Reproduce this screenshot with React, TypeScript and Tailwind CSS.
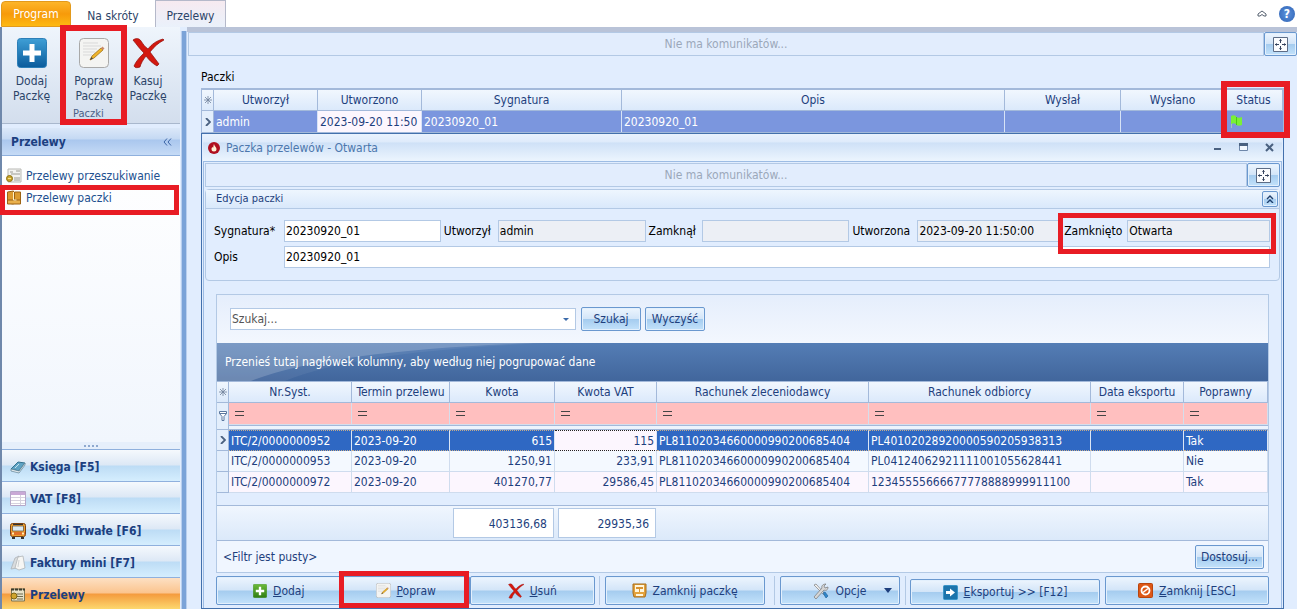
import React from "react";

const glossy =
  "rounded-xs border border-[#6a98cf] bg-[linear-gradient(#edf5fe_0%,#d3e5f8_48%,#a5ccef_52%,#c3e2fb_100%)] shadow-[inset_0_0_0_1px_#e3f0fd]";

const PlusIcon = ({ size, blue }: { size: number; blue?: boolean }) => (
  <svg width={size} height={size} viewBox="0 0 30 30">
    <defs>
      <linearGradient id={blue ? "plusBlue" : "plusGreen"} x1="0" y1="0" x2="0" y2="1">
        <stop offset="0" stopColor={blue ? "#3f9fd6" : "#6dbb3a"} />
        <stop offset="1" stopColor={blue ? "#0b5c9c" : "#2f7d12"} />
      </linearGradient>
    </defs>
    <rect x="0.5" y="0.5" width="29" height="29" rx="3" fill={blue ? "url(#plusBlue)" : "url(#plusGreen)"} stroke={blue ? "#2c7fb8" : "#3c8a1c"} />
    <path d="M12.500 6h5v6.500H24v5h-6.500V24h-5v-6.500H6v-5h6.500z" fill="#fff" />
  </svg>
);

const EditIcon = ({ size }: { size: number }) => (
  <svg width={size} height={size} viewBox="0 0 30 30">
    <rect x="0.5" y="0.5" width="29" height="29" rx="4" fill="#f4f4f2" stroke="#a9a9a9" />
    <path d="M4 5h15M4 8h18M4 11h14M4 14h12M4 17h9" stroke="#d9d9d9" />
    <path d="M11 22l2-4 9-8 2 2-9 8z" fill="#f0b429" stroke="#a0721a" strokeWidth="0.800" />
    <path d="M11 22l1.500-3 1.500 1.500z" fill="#444" />
    <path d="M22 10l1.500-1.500 2 2L24 12z" fill="#c98a6a" />
  </svg>
);

const CrossIcon = ({ size }: { size: number }) => (
  <svg width={size} height={size} viewBox="0 0 32 30">
    <path d="M1 2C4 0 7 0 9 3c2 3 4 6 7 8 4-5 8-8 15-10l1 1c-6 3-10 7-14 12 3 4 6 8 9 12l-2 2c-5-3-8-6-11-10-3 4-5 7-6 11-3 1-5 1-6-1 2-5 6-9 10-13C8 11 5 7 1 2z" fill="#d3180f" stroke="#8f0d08" strokeWidth="0.700" />
  </svg>
);

const ListIcon = () => (
  <svg width="16" height="16" viewBox="0 0 16 16">
    <path d="M2 1h13v13H2z" fill="#f3f3f1" stroke="#b9b9b5" />
    <path d="M4 4h3M10 3h4M5 6h9M8 10h6M8 12h6" stroke="#9c9c94" />
    <circle cx="3.500" cy="10.500" r="3" fill="#c9a52c" stroke="#8d7013" />
    <path d="M2 10.500h3" stroke="#f5e08c" />
  </svg>
);

const BoxIcon = () => (
  <svg width="16" height="16" viewBox="0 0 15 16">
    <path d="M1 2l6-1v13l-6-1zM8 2h6v11H8z" fill="#dc9a2e" stroke="#9c6313" />
    <path d="M1 10h13v4H1z" fill="#e9b04c" stroke="#9c6313" />
    <path d="M7 2v8h3" stroke="#fff0c4" fill="none" />
  </svg>
);

const ArchiveIcon = () => (
  <svg width="15" height="15" viewBox="0 0 15 15">
    <path d="M1 1h13v9l-1 4H2l-1-4z" fill="#e3a23c" stroke="#a86c18" />
    <path d="M3 2h9v7H3z" fill="#fff6dc" />
    <path d="M4 4h7v2H4zM7 6h1v3H7z" fill="#d99331" />
    <path d="M4 11h7v2H4z" fill="#fff6dc" />
  </svg>
);

const BookIcon = () => (
  <svg width="16" height="16" viewBox="0 0 16 16">
    <path d="M1 10L8 3l7 1-6 8z" fill="#5fa3c4" stroke="#33718f" />
    <path d="M1 10v2l8 2 6-8V4l-6 8z" fill="#e7eef2" stroke="#5b7f91" strokeWidth="0.700" />
    <path d="M5 9l4-4" stroke="#c5e3f0" />
  </svg>
);

const VatIcon = () => (
  <svg width="16" height="15" viewBox="0 0 16 15">
    <path d="M0.500 0.500h15v14H0.500z" fill="#fff" stroke="#b5a7c9" />
    <path d="M1 1h14v3H1z" fill="#c9a9d6" />
    <path d="M1 6.500h14M1 9.500h14M1 12.500h14M10.500 4v10" stroke="#d6d2de" />
  </svg>
);

const BusIcon = () => (
  <svg width="16" height="16" viewBox="0 0 16 16">
    <rect x="0.500" y="0.500" width="15" height="13" rx="2" fill="#f0a02c" stroke="#7b4312" />
    <path d="M2.500 3h11v5h-11z" fill="#dceaf2" stroke="#5c4a3a" strokeWidth="0.700" />
    <path d="M3 1.500h10" stroke="#333" />
    <path d="M1 9h14v3H1z" fill="#e0702a" />
    <path d="M2 10.500h2M12 10.500h2" stroke="#fff4a8" strokeWidth="2" />
    <path d="M2 14h3v2H2zM11 14h3v2h-3z" fill="#333" />
  </svg>
);

const PapersIcon = () => (
  <svg width="16" height="16" viewBox="0 0 16 16">
    <path d="M1 14L5 3l4-2-2 12z" fill="#d9dcde" stroke="#a9adb0" strokeWidth="0.700" />
    <path d="M5 13L8 2l5-1 2 12-6 2z" fill="#f6f6f4" stroke="#a9adb0" strokeWidth="0.700" />
    <path d="M9 5l-1 7" stroke="#cfd2d4" />
  </svg>
);

const TransferIcon = () => (
  <svg width="16" height="16" viewBox="0 0 16 16">
    <path d="M1.500 2h13v12h-13z" fill="#e8e2c8" stroke="#7b7654" />
    <path d="M1 2.500h14" stroke="#3d3b2a" strokeWidth="2" strokeDasharray="3 1" />
    <path d="M7 7h6M7 9.500h6M7 12h6" stroke="#6f6b4e" />
    <circle cx="4" cy="9" r="3" fill="#cfa42c" stroke="#7f6414" />
  </svg>
);

const MoveIcon = () => (
  <svg width="15" height="15" viewBox="0 0 15 15">
    <path d="M0.500 0.500h14v14H0.500z" fill="#fbfcfe" stroke="#5c6c86" />
    <path d="M7.500 2v4M7.500 9v4M2 7.500h4M9 7.500h4" stroke="#34435e" />
    <path d="M6 4l1.500-2L9 4zM6 11l1.500 2L9 11zM4 6L2 7.500 4 9zM11 6l2 1.500L11 9z" fill="#34435e" />
  </svg>
);

const FlameIcon = () => (
  <svg width="12" height="12" viewBox="0 0 12 12">
    <circle cx="6" cy="6" r="6" fill="#b01020" />
    <path d="M6 2c0 2 2.500 3 2.500 5A2.500 2.500 0 0 1 3.500 7c0-1 .6-1.500 1-2l.7.8C5.500 4.500 5.500 3 6 2z" fill="#fff3d6" />
  </svg>
);

const FlagIcon = () => (
  <svg width="12" height="14" viewBox="0 0 12 14">
    <path d="M0.500 1v12" stroke="#a9c3b4" />
    <path d="M0 1c2-1 3-1 5 0v1c2 1 4 1 6 0v8c-2 1-4 1-6 0V9C3 8 2 8 0 9z" fill="#7af036" />
    <path d="M5.500 2v8" stroke="#4cc912" />
  </svg>
);

const ToolsIcon = () => (
  <svg width="16" height="16" viewBox="0 0 16 16">
    <path d="M1 2l2-1 9 10-1 1z" fill="#f2f2f2" stroke="#7d7d7d" strokeWidth="0.700" />
    <path d="M10 10l2-1 3 4-2 2z" fill="#2f86c9" stroke="#1c5c94" strokeWidth="0.600" />
    <path d="M1 14l8-9c-1-2 1-4 4-4l-2 2 1 2 3-1c0 3-2 4-4 3l-8 9z" fill="#d6d6d6" stroke="#777" strokeWidth="0.700" />
  </svg>
);

const ExportIcon = () => (
  <svg width="15" height="15" viewBox="0 0 15 15">
    <rect x="0.500" y="0.500" width="14" height="14" rx="1" fill="#1c74ac" stroke="#3a95c9" />
    <path d="M3 6h4V3.500l5 4-5 4V9H3z" fill="#fff" />
  </svg>
);

const StopIcon = () => (
  <svg width="15" height="15" viewBox="0 0 15 15">
    <rect x="0.500" y="0.500" width="14" height="14" rx="1" fill="#dd5716" stroke="#b9440d" />
    <circle cx="7.500" cy="7.500" r="4" fill="none" stroke="#fff" strokeWidth="1.800" />
    <path d="M5 9.500l5-4" stroke="#fff" strokeWidth="1.600" />
  </svg>
);

const StarIcon = () => (
  <svg className="mx-auto" width="8" height="8" viewBox="0 0 8 8">
    <path d="M4 0v8M0 4h8M1 1l6 6M7 1L1 7" stroke="#6f8099" strokeWidth="0.800" />
  </svg>
);

const RowArrow = () => (
  <svg className="mx-auto" width="6" height="8" viewBox="0 0 6 8">
    <path d="M1 0l4 4-4 4" fill="none" stroke="#4a6180" strokeWidth="1.800" />
  </svg>
);

const Mark = ({ className }: { className: string }) => (
  <div className={`pointer-events-none absolute z-10 border-[#e81c24] ${className}`} />
);

const MessageBar = () => (
  <div className="flex h-6">
    <div className="flex flex-1 items-center justify-center border border-[#b3c9e5] bg-[#e2edfd] text-[#9ba8ba]">
      Nie ma komunikatów...
    </div>
    <button className={`flex w-[33px] items-center justify-center ${glossy}`} aria-label="Rozwiń komunikaty">
      <MoveIcon />
    </button>
  </div>
);

const Field = ({ label, value, locked, className }: { label: string; value: string; locked?: boolean; className?: string }) => {
  const id = React.useId();
  return (
    <>
      <label htmlFor={id} className="pl-[3px] whitespace-nowrap">{label}</label>
      <input
        id={id}
        defaultValue={value}
        readOnly={locked}
        className={`h-[22px] w-full min-w-0 border border-[#b3c9e5] px-px outline-none ${className ?? ""}`}
      />
    </>
  );
};

const ribbon = [
  { icon: <PlusIcon size={30} blue />, label: "Dodaj", width: "w-[59px]", marked: false },
  { icon: <EditIcon size={30} />, label: "Popraw", width: "w-[66px]", marked: true },
  { icon: <CrossIcon size={32} />, label: "Kasuj", width: "w-[42px]", marked: false },
];

const sections = [
  { icon: <BookIcon />, label: "Księga [F5]" },
  { icon: <VatIcon />, label: "VAT [F8]" },
  { icon: <BusIcon />, label: "Środki Trwałe [F6]" },
  { icon: <PapersIcon />, label: "Faktury mini [F7]" },
  { icon: <TransferIcon />, label: "Przelewy", active: true },
];

const packageHeads = ["Utworzył", "Utworzono", "Sygnatura", "Opis", "Wysłał", "Wysłano", "Status"];
const heads = ["Nr.Syst.", "Termin przelewu", "Kwota", "Kwota VAT", "Rachunek zleceniodawcy", "Rachunek odbiorcy", "Data eksportu", "Poprawny"];
const rows = [
  ["ITC/2/0000000952", "2023-09-20", "615", "115", "PL81102034660000990200685404", "PL40102028920000590205938313", "", "Tak"],
  ["ITC/2/0000000953", "2023-09-20", "1250,91", "233,91", "PL81102034660000990200685404", "PL04124062921111001055628441", "", "Nie"],
  ["ITC/2/0000000972", "2023-09-20", "401270,77", "29586,45", "PL81102034660000990200685404", "12345555666677778888999911100", "", "Tak"],
];

const headCell = "overflow-hidden whitespace-nowrap border-r border-b border-[#a3b9da] bg-[linear-gradient(#f1f7fe,#dbe9fb)] p-0 text-center font-normal text-[#1e3f7d]";

const Sidebar = () => (
  <aside className="flex w-[180px] shrink-0 flex-col border-l-2 border-[#6f88ab]">
    <div className="h-[97px] border-b border-[#a9b8cd] bg-[linear-gradient(#eff5fc,#dbe5f2_70%,#d3deed)] pt-[11px] text-[#2c4468]">
      <div className="flex">
        {ribbon.map((b) => (
          <button key={b.label} className={`relative flex flex-col items-center leading-[15px] ${b.width}`}>
            <span className="flex h-[30px] items-center">{b.icon}</span>
            <span className="mt-1.5">{b.label}</span>
            <span>Paczkę</span>
            {b.marked && <Mark className="-top-[13px] -left-px h-[100px] w-[67px] border-[6px]" />}
          </button>
        ))}
      </div>
      <p className="pl-[71px] text-[11px] leading-[20px] text-[#4a6187]">Paczki</p>
    </div>
    <div className="mt-1 flex h-7 items-center justify-between border-b border-[#8fb0dd] bg-[linear-gradient(#dbe8f9_0%,#c5d9f3_40%,#aac7ee_45%,#c6dbf6_100%)] pr-2 pl-[9px]">
      <h2 className="font-bold text-[#1c3f80]">Przelewy</h2>
      <button aria-label="Zwiń">
        <svg width="9" height="8" viewBox="0 0 9 8">
          <path d="M4 0.500L1 4l3 3.500M8 0.500L5 4l3 3.500" fill="none" stroke="#3d66a6" />
        </svg>
      </button>
    </div>
    <nav className="flex-1 bg-[linear-gradient(#fff,#f1f6fd)] pt-[9px] text-[#21508f]">
      <a href="#szukaj" className="flex h-[22px] items-center gap-1 pl-1"><ListIcon />Przelewy przeszukiwanie</a>
      <a href="#paczki" className="relative flex h-[22px] items-center gap-1 pl-1">
        <BoxIcon />Przelewy paczki
        <Mark className="-top-[2px] -left-[2px] h-[30px] w-[179px] border-[5px]" />
      </a>
    </nav>
    <div className="flex h-[7px] items-center justify-center gap-0.5 bg-[#e6effb]">
      {[0, 1, 2, 3].map((i) => <span key={i} className="h-0.5 w-0.5 bg-[#8fa9cf]" />)}
    </div>
    {sections.map((s) => (
      <button
        key={s.label}
        className={`flex h-8 shrink-0 items-center gap-1 border-t border-[#8fb0dd] pt-0.5 pl-2 font-bold text-[#1c3f80] ${
          s.active
            ? "bg-[linear-gradient(#fde0c3_0%,#fbc48e_48%,#f49b3e_52%,#fdd86f_100%)]"
            : "bg-[linear-gradient(#f5f9fd_0%,#dde8f5_48%,#bddcf5_52%,#d5eefe_100%)]"
        }`}
      >
        {s.icon}
        {s.label}
      </button>
    ))}
  </aside>
);

const PackagesTable = () => (
  <div className="relative">
    <table className="w-full table-fixed border-separate border-spacing-0 border border-t-2 border-[#a3b9da]">
      <colgroup>
        <col className="w-[12px]" /><col className="w-[104px]" /><col className="w-[104px]" /><col className="w-[200px]" />
        <col /><col className="w-[116px]" /><col className="w-[104px]" /><col className="w-[58px]" />
      </colgroup>
      <thead>
        <tr className="h-[21px]">
          <th className={headCell}><StarIcon /></th>
          {packageHeads.map((h) => <th key={h} className={headCell}>{h}</th>)}
        </tr>
      </thead>
      <tbody>
        <tr className="h-[21px] bg-[#7b96de] text-white">
          <td className="border-r border-[#a3b9da] bg-[#e3eefc] p-0"><RowArrow /></td>
          {["admin", "2023-09-20 11:50", "20230920_01", "20230920_01", "", ""].map((c, i) => (
            <td key={i} className={`overflow-hidden whitespace-nowrap border-r border-[#d7e3f6] p-0 pl-0.5 ${i === 1 ? "bg-[#fcf6fe] text-[#1e3f7d]" : ""}`}>{c}</td>
          ))}
          <td className="p-0 pl-1.5"><FlagIcon /></td>
        </tr>
      </tbody>
    </table>
    <Mark className="-top-[7px] -right-[6px] h-[57px] w-[69px] border-[6px]" />
  </div>
);

const TransfersTable = () => (
  <table className="w-full table-fixed border-separate border-spacing-0 border-t border-[#a3b9da] text-[#1e3f7d]">
    <colgroup>
      <col className="w-[12px]" /><col className="w-[123px]" /><col className="w-[98px]" /><col className="w-[105px]" />
      <col className="w-[102px]" /><col className="w-[212px]" /><col /><col className="w-[93px]" /><col className="w-[84px]" />
    </colgroup>
    <thead>
      <tr className="h-[21px]">
        <th className={headCell}><StarIcon /></th>
        {heads.map((h) => <th key={h} className={headCell}>{h}</th>)}
      </tr>
    </thead>
    <tbody>
      <tr className="h-[22px]">
        <td rowSpan={2} className="border-r border-b border-[#a3b9da] bg-[#e3eefc] p-0">
          <svg className="mx-auto" width="8" height="10" viewBox="0 0 8 10">
            <path d="M0.500 0.500h7v2L5 5.500v4H3v-4L0.500 2.500zM0.500 2.500h7" fill="#fff" stroke="#5b779f" />
          </svg>
        </td>
        {heads.map((h) => (
          <td key={h} className="border-r border-b border-[#d5deec] bg-[#ffbfbf] p-0 pl-1.5">
            <svg width="9" height="5" viewBox="0 0 9 5"><path d="M0 0.500h9M0 4.500h9" stroke="#444" /></svg>
          </td>
        ))}
      </tr>
      <tr className="h-[5px]"><td colSpan={8} className="border-y border-[#a3b9da] bg-[#edf4fd] p-0" /></tr>
      {rows.map((r, n) => (
        <tr key={r[0]} className={`h-[21px] ${n === 0 ? "bg-[#2f68c3] text-white" : n === 1 ? "bg-[#f4f9ff]" : "bg-[#fcf6fe]"}`}>
          <td className="border-r border-b border-[#a3b9da] bg-[#e3eefc] p-0">{n === 0 && <RowArrow />}</td>
          {r.map((c, i) => (
            <td
              key={i}
              className={`overflow-hidden whitespace-nowrap border-r border-b p-0 ${i === 2 || i === 3 ? "pr-0.5 text-right" : "pl-0.5"} ${
                n === 0 ? "border-t border-r-[#dbe6f5] [border-block-style:dotted]" : "border-[#cfdcee]"
              } ${n === 0 && i === 3 ? "border-y-[#222] bg-[#fcf6fe] text-[#1e3f7d]" : n === 0 ? "border-y-[#c3ab8c]" : ""}`}
            >
              {c}
            </td>
          ))}
        </tr>
      ))}
    </tbody>
  </table>
);

const action = `flex items-center justify-center gap-1.5 whitespace-nowrap ${glossy}`;

const Actions = () => (
  <div className="mx-[11px] mt-[3px] flex text-[#1e3f7d]">
    <button className={`h-[29px] flex-[125] ${action}`}><PlusIcon size={14} /><span><u>D</u>odaj</span></button>
    <div className="relative flex flex-[130]">
      <button className={`h-[29px] w-full ${action}`}><EditIcon size={15} /><span><u>P</u>opraw</span></button>
      <Mark className="-top-[5px] -left-[3px] h-[37px] w-[130px] border-[5px]" />
    </div>
    <button className={`h-[29px] flex-[124] ${action}`}><CrossIcon size={16} /><span><u>U</u>suń</span></button>
    <div className="mr-[5px] ml-1 w-px bg-[#b3c9e5]" />
    <button className={`h-[29px] flex-[160] ${action}`}><ArchiveIcon />Zamknij paczkę</button>
    <div className="mr-[5px] ml-[9px] w-px bg-[#b3c9e5]" />
    <button className={`h-[29px] flex-[120] ${action}`}>
      <span className="w-5" />
      <ToolsIcon />Opcje
      <svg className="ml-3" width="8" height="5" viewBox="0 0 8 5"><path d="M0 0h8L4 5z" fill="#1e3f7d" /></svg>
    </button>
    <div className="mr-1 ml-[5px] w-px bg-[#b3c9e5]" />
    <button className={`mt-[3px] h-[26px] flex-[190] ${action}`}><ExportIcon /><span><u>E</u>ksportuj &gt;&gt; [F12]</span></button>
    <button className={`ml-[5px] h-[29px] flex-[164] ${action}`}><StopIcon /><span><u>Z</u>amknij [ESC]</span></button>
  </div>
);

const App = () => {
  return (
    <div className="flex h-screen flex-col overflow-hidden bg-[#e1edfe] font-['DejaVu_Sans_Condensed','Noto_Sans',sans-serif] text-[12px] leading-4 text-black">
      <header className="flex h-[27px] shrink-0 items-end bg-white text-[#2c4468]">
        <button className="ml-px h-[26px] w-[70px] rounded-t-sm border border-[#e39a1c] bg-[linear-gradient(#fdb52a,#f79a0a_50%,#fdb913)] text-white">Program</button>
        <button className="h-[26px] w-[84px] pt-1">Na skróty</button>
        <button className="h-[27px] w-[71px] border border-b-0 border-[#b5b9ca] bg-[linear-gradient(#f6eaf0,#eaf1fb)] pt-1">Przelewy</button>
        <div className="ml-auto flex items-center gap-3 self-center pr-0.5">
          <button aria-label="Zwiń wstążkę">
            <svg width="10" height="8" viewBox="0 0 10 8"><path d="M1 4l4-3 4 3v2H7L5 4.500 3 6H1z" fill="none" stroke="#55606f" /></svg>
          </button>
          <button aria-label="Pomoc" className="h-4 w-4 rounded-full bg-[radial-gradient(#5d93dd,#2e62b4)] font-bold text-white">?</button>
        </div>
      </header>
      <div className="flex min-h-0 flex-1">
        <Sidebar />
        <div className="mt-1 ml-px w-[6px] shrink-0 border-x border-[#b9cfee] bg-[#7ba3d8]" />
        <main className="flex min-w-0 flex-1 flex-col border-t-[5px] border-t-[#b9c3d8] pl-px">
          <MessageBar />
          <div className="mx-[13px] flex flex-1 flex-col">
            <h1 className="mt-[13px] mb-[3px]">Paczki</h1>
            <PackagesTable />
            <section className="flex flex-1 flex-col border border-[#4370ac] px-px">
              <div className="flex h-[27px] shrink-0 items-center bg-[linear-gradient(#e9f2fe_0%,#dfebfb_28%,#cfe1f7_34%,#ecf5fe_100%)] pr-2 pl-[5px] text-[#4c77ad]">
                <FlameIcon />
                <h2 className="ml-1.5">Paczka przelewów - Otwarta</h2>
                <div className="ml-auto flex items-center gap-[17px]">
                  <button aria-label="Minimalizuj"><svg width="8" height="9"><path d="M0 6h7" stroke="#4a6180" strokeWidth="2" /></svg></button>
                  <button aria-label="Maksymalizuj"><svg width="9" height="9"><path d="M0.500 1.500h8v6h-8z" fill="#f3f8fe" stroke="#6e87aa" /><path d="M0 1.500h9" stroke="#4a6180" strokeWidth="3" /></svg></button>
                  <button aria-label="Zamknij okno"><svg width="9" height="9"><path d="M1 1l7 7M8 1L1 8" stroke="#4a6180" strokeWidth="2" /></svg></button>
                </div>
              </div>
              <div className="flex-1 border border-b-0 border-[#9dbce4] px-px pt-px">
                <MessageBar />
                <div className="mt-0.5 rounded-sm border border-[#b3c9e5]">
                  <div className="flex h-[19px] items-center justify-between border-b border-[#b3c9e5] bg-[linear-gradient(#eef6fe,#d9e8fb)] pr-px pl-2.5 text-[11px] text-[#1e3f7d]">
                    Edycja paczki
                    <button className={`flex h-4 w-4 items-center justify-center ${glossy}`} aria-label="Zwiń edycję">
                      <svg width="8" height="8" viewBox="0 0 8 8"><path d="M1 4l3-3 3 3M1 8l3-3 3 3" fill="none" stroke="#1e3f6d" strokeWidth="1.400" /></svg>
                    </button>
                  </div>
                  <form className="relative grid grid-cols-[73px_157fr_57px_148fr_56px_148fr_68px_144fr_66px_143fr] items-center gap-y-1 pt-[11px] pr-[9px] pb-3 pl-[5px] [&_input]:bg-white [&_input:read-only]:bg-[#eceff5]">
                    <Field label="Sygnatura*" value="20230920_01" />
                    <Field label="Utworzył" value="admin" locked />
                    <Field label="Zamknął" value="" locked />
                    <Field label="Utworzona" value="2023-09-20 11:50:00" locked />
                    <Field label="Zamknięto" value="Otwarta" locked />
                    <Field label="Opis" value="20230920_01" className="col-span-9" />
                    <Mark className="top-1 right-[3px] h-[41px] w-[218px] border-[5px]" />
                  </form>
                </div>
                <div className="mx-[11px] mt-[13px] border border-[#b3c9e5] bg-[#f0f6ff]">
                  <div className="flex h-12 items-center bg-[linear-gradient(#e5eefc,#f3f7fe)] pl-[13px] text-[#1e3f7d]">
                    <div className="flex h-[22px] w-[346px] items-center border border-[#b3c9e5] bg-white pr-1.5">
                      <input aria-label="Szukaj" placeholder="Szukaj..." className="min-w-0 flex-1 pl-px outline-none placeholder:text-[#555]" />
                      <button aria-label="Historia"><svg width="6" height="3" viewBox="0 0 6 3"><path d="M0 0h6L3 3z" fill="#3b6aaa" /></svg></button>
                    </div>
                    <button className={`ml-[5px] h-6 w-[60px] ${glossy}`}>Szukaj</button>
                    <button className={`ml-1 h-6 w-[60px] ${glossy}`}>Wyczyść</button>
                  </div>
                  <div className="relative flex h-[38px] items-center bg-[linear-gradient(#547db5,#41669c)] pl-2 text-white">
                    <svg className="absolute top-0 left-0" width="330" height="38" viewBox="0 0 330 38">
                      <path d="M0 0h330C200 6 120 17 68 38H0z" fill="#fff" opacity="0.060" />
                      <path d="M0 0h318C190 5 90 16 34 38H0z" fill="#fff" opacity="0.180" />
                    </svg>
                    <span className="relative">Przenieś tutaj nagłówek kolumny, aby według niej pogrupować dane</span>
                  </div>
                  <TransfersTable />
                  <div className="h-3 bg-[#e1edfe]" />
                  <div className="flex h-9 items-center border-y border-[#a3b9da] bg-[linear-gradient(#f0f6fe,#dbe9fa)] pl-[236px] text-[#1e3f7d]">
                    <output className="h-[30px] w-[101px] border border-[#b3c9e5] bg-white pr-1.5 text-right leading-[30px]">403136,68</output>
                    <output className="ml-1 h-[30px] w-[98px] border border-[#b3c9e5] bg-white pr-1.5 text-right leading-[30px]">29935,36</output>
                  </div>
                  <div className="flex h-[31px] items-center justify-between pr-1 pl-1.5 text-[#1e3f7d]">
                    &lt;Filtr jest pusty&gt;
                    <button className={`h-6 w-[69px] ${glossy}`}>Dostosuj...</button>
                  </div>
                </div>
                <Actions />
              </div>
            </section>
          </div>
        </main>
      </div>
    </div>
  );
};

export default App;
